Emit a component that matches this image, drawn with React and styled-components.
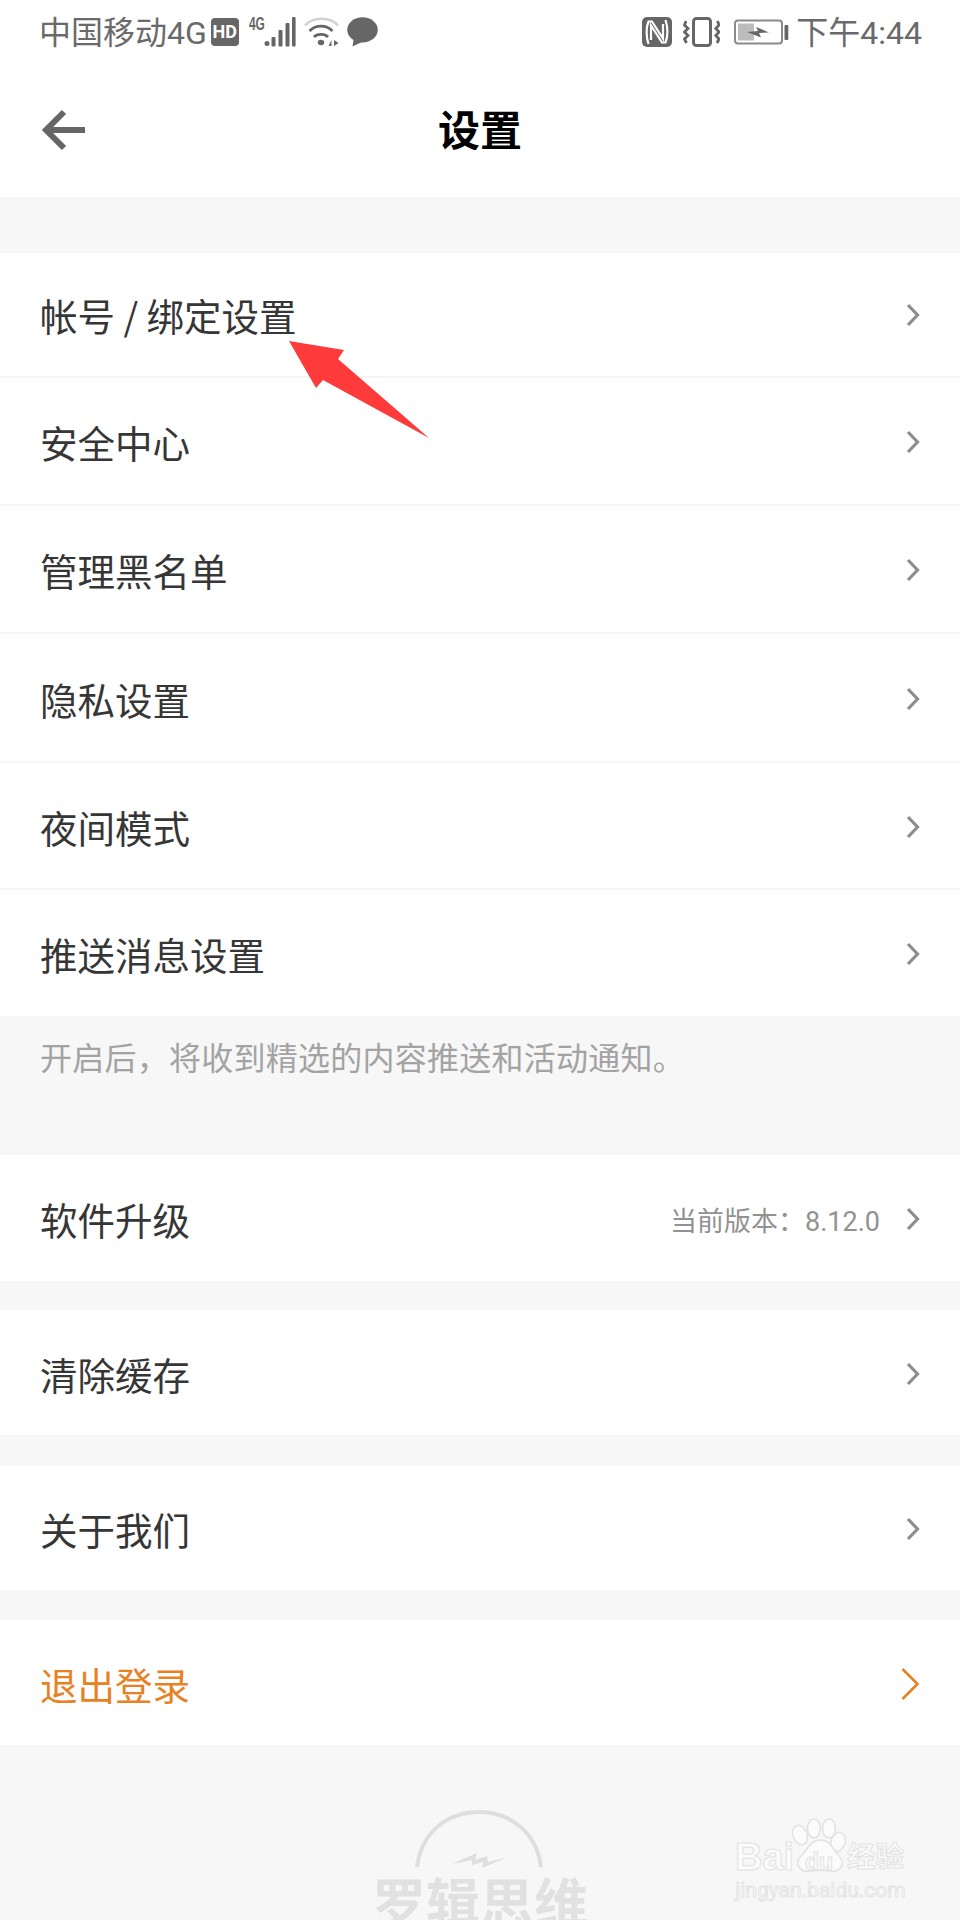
import React from "react";
import styled, { createGlobalStyle } from "styled-components";

const Global = createGlobalStyle`
  html, body { margin: 0; padding: 0; background: #f7f7f7; }
  body { font-family: Roboto, "Noto Sans CJK SC", sans-serif; }
  #root { width: 960px; height: 1920px; overflow: hidden; }
`;

const Page = styled.div`
  position: relative;
  width: 960px;
  height: 1920px;
  overflow: hidden;
  background: #f7f7f7;
  display: flex;
  flex-direction: column;
`;
const Header = styled.header`
  background: #fff;
  height: 197px;
  display: flex;
  flex-direction: column;
`;
const StatusBar = styled.div`
  height: 66px;
  padding: 15px 38px 0 39px;
  box-sizing: border-box;
  display: flex;
  justify-content: space-between;
  align-items: flex-start;
  color: #6a6a6a;
  font-size: 32px;
  line-height: 34px;
`;
const StatusGroup = styled.div`
  display: flex;
  align-items: center;
  height: 34px;
`;
const StatusText = styled.span`
  white-space: nowrap;
  padding-top: 2px;
`;
const HdBadge = styled.span`
  width: 28px;
  height: 28px;
  border-radius: 4px;
  background: #666;
  color: #fff;
  font: 700 18px/28px Roboto, sans-serif;
  text-align: center;
  margin: 0 10px 0 4px;
`;
const SignalWrap = styled.span`
  position: relative;
  width: 47px;
  height: 30px;
  margin-right: 8px;
`;
const TinyLabel = styled.span`
  position: absolute;
  left: 0;
  top: -2px;
  font: 700 18px/18px "Liberation Sans", sans-serif;
  color: #666;
  transform: scaleX(0.66);
  transform-origin: left top;
`;
const Icon = styled.svg`
  display: block;
  flex: none;
  margin-right: ${(p) => p.$mr || 0}px;
`;
const SignalBars = styled.svg`
  display: block;
`;
const NavBar = styled.div`
  position: relative;
  flex: 1;
  display: flex;
  align-items: center;
  justify-content: center;
  padding-bottom: 8px;
  box-sizing: border-box;
`;
const BackIcon = styled.svg`
  position: absolute;
  left: 40px;
  top: 43px;
`;
const Title = styled.h1`
  margin: 0;
  font-size: 42px;
  font-weight: 700;
  color: #000;
  line-height: 50px;
  font-family: "Noto Sans CJK SC", sans-serif;
`;
const Section = styled.section`
  background: #fff;
  margin-top: ${(p) => p.$top}px;
`;
const Row = styled.div`
  height: ${(p) => p.$h}px;
  box-sizing: border-box;
  padding: ${(p) => p.$pt}px 40px 0 40px;
  display: flex;
  align-items: center;
  justify-content: space-between;
  border-bottom: ${(p) => (p.$line ? "2px solid #f5f5f5" : "none")};
`;
const Label = styled.span`
  font-size: 37.5px;
  line-height: 50px;
  color: ${(p) => (p.$accent ? "#e8811f" : "#363636")};
  font-family: "Noto Sans CJK SC", sans-serif;
`;
const RowEnd = styled.div`
  display: flex;
  align-items: center;
`;
const Meta = styled.span`
  font-size: 27px;
  color: #929292;
  margin-right: 26px;
  font-family: Roboto, "Noto Sans CJK SC", sans-serif;
`;
const Hint = styled.p`
  margin: 0;
  height: 82px;
  padding: 19px 0 0 40px;
  box-sizing: border-box;
  font-size: 32px;
  line-height: 42px;
  letter-spacing: 0.25px;
  color: #a3a3a3;
  font-family: "Noto Sans CJK SC", sans-serif;
`;
const Pointer = styled.svg`
  position: absolute;
  left: 280px;
  top: 330px;
`;
const Brand = styled.div`
  position: absolute;
  left: 362px;
  top: 1806px;
  width: 236px;
  display: flex;
  flex-direction: column;
  align-items: center;
`;
const BrandArt = styled.svg`
  display: block;
  flex: none;
`;
const BrandName = styled.span`
  margin-top: -5px;
  font: 700 54px/60px "Noto Sans CJK SC", sans-serif;
  color: #e1e1e1;
  white-space: nowrap;
`;
const Watermark = styled.div`
  position: absolute;
  left: 733px;
  top: 1818px;
  width: 175px;
  display: flex;
  flex-direction: column;
  align-items: center;
`;
const MarkTop = styled.div`
  position: relative;
  width: 175px;
  height: 60px;
`;
const Paw = styled.svg`
  position: absolute;
  left: 2px;
  top: 0;
`;
const MarkBai = styled.span`
  position: absolute;
  left: 2px;
  top: 17px;
  font: 700 38px/44px "Liberation Sans", sans-serif;
  color: #fbfbfb;
  -webkit-text-stroke: 1px #e2e2e2;
`;
const MarkDu = styled.span`
  position: absolute;
  left: 72px;
  top: 31px;
  font: 700 23px/26px "Liberation Sans", sans-serif;
  color: #fbfbfb;
  -webkit-text-stroke: 1px #e2e2e2;
`;
const MarkCn = styled.span`
  position: absolute;
  left: 114px;
  top: 19px;
  font: 700 28.5px/36px "Noto Sans CJK SC", sans-serif;
  color: #fbfbfb;
  -webkit-text-stroke: 1px #e2e2e2;
  white-space: nowrap;
`;
const MarkUrl = styled.span`
  font: 400 21px/24px Roboto, sans-serif;
  color: #fbfbfb;
  -webkit-text-stroke: 1px #e4e4e4;
  white-space: nowrap;
`;

const Chevron = ({ accent }) =>
  accent ? (
    <Icon width="20" height="34" viewBox="0 0 20 34">
      <path d="M2.5 2 L17.5 17 L2.5 32" fill="none" stroke="#e8811f" strokeWidth="2.6" />
    </Icon>
  ) : (
    <Icon width="14" height="24" viewBox="0 0 14 24">
      <path d="M2 2 L11.5 12 L2 22" fill="none" stroke="#8a8d92" strokeWidth="3.2" />
    </Icon>
  );

const Signal = () => (
  <SignalWrap>
    <TinyLabel>4G</TinyLabel>
    <SignalBars width="47" height="30" viewBox="0 0 47 30">
      <circle cx="18" cy="26.5" r="2.5" fill="#666" />
      <rect x="22.5" y="20" width="4" height="9.5" rx="1" fill="#666" />
      <rect x="29.5" y="13" width="4" height="16.5" rx="1" fill="#666" />
      <rect x="36.5" y="6" width="4" height="23.5" rx="1" fill="#666" />
      <rect x="43" y="0" width="3.6" height="29.5" rx="1" fill="#666" />
    </SignalBars>
  </SignalWrap>
);
const Wifi = () => (
  <Icon width="36" height="30" viewBox="0 0 36 30" $mr={7}>
    <path d="M1 8.5 C9 -0.5 26 -0.5 34 8.5" fill="none" stroke="#d2d2d2" strokeWidth="2.6" />
    <path d="M5.5 14 C12 7.5 22 7.5 28.5 14" fill="none" stroke="#666" strokeWidth="2.8" />
    <path d="M10 20 C13 16.5 21 16.5 24 20" fill="none" stroke="#666" strokeWidth="2.8" />
    <ellipse cx="17" cy="25.5" rx="3.2" ry="2.8" fill="#666" />
    <path d="M27.5 29 V23 L24.5 29 Z M30 23 V29 L34.5 26 Z" fill="#666" />
  </Icon>
);
const Bubble = () => (
  <Icon width="31" height="30" viewBox="0 0 31 30">
    <ellipse cx="15.5" cy="12.8" rx="15.3" ry="12.6" fill="#666" />
    <path d="M7 20 L5.5 29.5 L17 24 Z" fill="#666" />
  </Icon>
);
const Nfc = () => (
  <Icon width="30" height="30" viewBox="0 0 30 30" $mr={11}>
    <rect width="30" height="30" rx="5" fill="#666" />
    <path d="M6.5 27 C4 20 4 10 6.5 4.5 H10 L21 21.5 V7" fill="none" stroke="#fff" strokeWidth="2.2" />
    <path d="M23.5 3 C26 10 26 20 23.5 25.5 H20 L9 8.5 V23" fill="none" stroke="#fff" strokeWidth="2.2" />
  </Icon>
);
const Vibrate = () => (
  <Icon width="37" height="30" viewBox="0 0 37 30" $mr={14}>
    <rect x="10.5" y="1.5" width="17" height="27" rx="3" fill="none" stroke="#666" strokeWidth="3" />
    <path d="M3 4 L1.5 8 L5 11.5 L1.5 15 L5 18.5 L1.5 22 L3.5 26" fill="none" stroke="#666" strokeWidth="2.8" />
    <path d="M34.5 4 L36 8 L32.8 11.5 L36 15 L32.8 18.5 L36 22 L34 26" fill="none" stroke="#666" strokeWidth="2.8" />
  </Icon>
);
const Battery = () => (
  <Icon width="55" height="26" viewBox="0 0 55 26" $mr={7}>
    <rect x="1" y="1.5" width="47" height="23" rx="3" fill="none" stroke="#8a8a8a" strokeWidth="2" />
    <rect x="4" y="4.5" width="16" height="17" fill="#bcbcbc" />
    <rect x="50.5" y="6" width="3.8" height="15" rx="1" fill="#666" />
    <path d="M13 13 L24 12 L22 8 L35 13.4 L25 14 L27 18.5 Z" fill="#666" />
  </Icon>
);

const groupOne = ["帐号 / 绑定设置", "安全中心", "管理黑名单", "隐私设置", "夜间模式", "推送消息设置"];
const rowHeights = [125, 128, 128, 129, 127, 126];

const singles = [
  { label: "软件升级", top: 57, h: 126, meta: "当前版本：8.12.0" },
  { label: "清除缓存", top: 29, h: 125 },
  { label: "关于我们", top: 31, h: 124 },
  { label: "退出登录", top: 30, h: 125, accent: true },
];

export default function App() {
  return (
    <Page>
      <Global />
      <Header>
        <StatusBar>
          <StatusGroup>
            <StatusText>中国移动4G</StatusText>
            <HdBadge>HD</HdBadge>
            <Signal />
            <Wifi />
            <Bubble />
          </StatusGroup>
          <StatusGroup>
            <Nfc />
            <Vibrate />
            <Battery />
            <StatusText>下午4:44</StatusText>
          </StatusGroup>
        </StatusBar>
        <NavBar>
          <BackIcon width="46" height="42" viewBox="0 0 46 42">
            <path d="M24 3 L6 21 L24 39 M6 21 H45" fill="none" stroke="#666" strokeWidth="6" />
          </BackIcon>
          <Title>设置</Title>
        </NavBar>
      </Header>
      <Section $top={56}>
        {groupOne.map((label, i) => (
          <Row key={label} $h={rowHeights[i]} $pt={i === 0 ? 0 : 2} $line={i < groupOne.length - 1}>
            <Label>{label}</Label>
            <Chevron />
          </Row>
        ))}
      </Section>
      <Hint>开启后，将收到精选的内容推送和活动通知。</Hint>
      {singles.map((s) => (
        <Section key={s.label} $top={s.top}>
          <Row $h={s.h} $pt={2}>
            <Label $accent={s.accent}>{s.label}</Label>
            <RowEnd>
              {s.meta && <Meta>{s.meta}</Meta>}
              <Chevron accent={s.accent} />
            </RowEnd>
          </Row>
        </Section>
      ))}
      <Brand>
        <BrandArt width="236" height="70" viewBox="0 0 236 70">
          <path d="M55 61 C59 28 84 6 117 6 C150 6 175 28 179 61" fill="none" stroke="#dedede" strokeWidth="4" />
          <path d="M90 58 L115 47 L113 54 L125 50 L126 56 L146 51 L120 62 L121 56 L110 59 L110 54 Z" fill="#dedede" />
        </BrandArt>
        <BrandName>罗辑思维</BrandName>
      </Brand>
      <Watermark>
        <MarkTop>
          <Paw width="120" height="60" viewBox="0 0 120 60">
            <g fill="#fbfbfb" stroke="#e2e2e2" strokeWidth="1.5">
              <ellipse cx="65" cy="17" rx="7" ry="10" transform="rotate(-20 65 17)" />
              <ellipse cx="79" cy="10.5" rx="6.5" ry="9.5" />
              <ellipse cx="94" cy="10.5" rx="6.5" ry="9.5" />
              <ellipse cx="103" cy="24" rx="7" ry="10" transform="rotate(20 103 24)" />
              <path d="M86 22 C96 22 98 32 104 38 C112 46 104 55 95 53 C90 52 82 52 76 53 C66 55 58 46 66 38 C73 32 74 22 86 22 Z" />
            </g>
          </Paw>
          <MarkBai>Bai</MarkBai>
          <MarkDu>du</MarkDu>
          <MarkCn>经验</MarkCn>
        </MarkTop>
        <MarkUrl>jingyan.baidu.com</MarkUrl>
      </Watermark>
      <Pointer width="160" height="120" viewBox="0 0 160 120">
        <polygon points="9,11 64,20 58,29 149,108 43,50 36,58" fill="#fe3a3a" />
      </Pointer>
    </Page>
  );
}
